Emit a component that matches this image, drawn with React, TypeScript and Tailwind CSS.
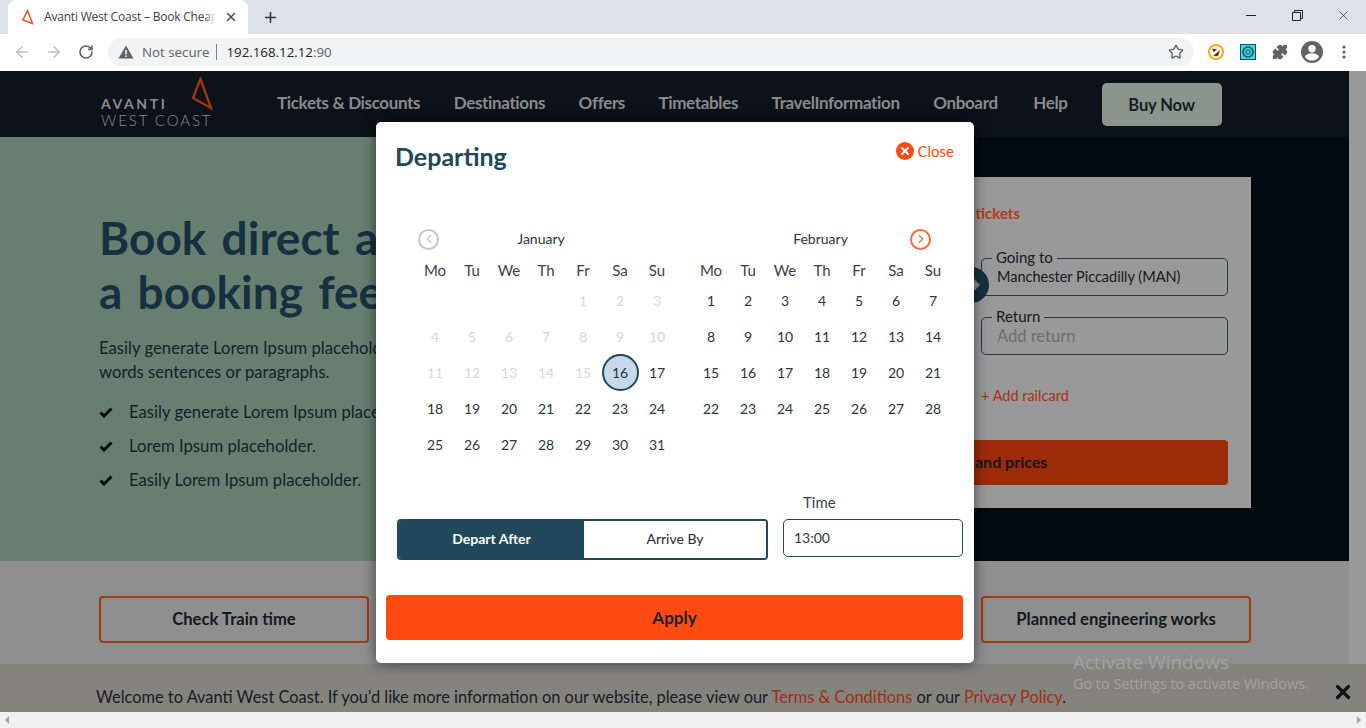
import { ArrowLeft, ArrowRight, RotateCw, Star, Puzzle, X, Plus, ChevronLeft, ChevronRight } from 'lucide-react'

const navLinks = ['Tickets & Discounts', 'Destinations', 'Offers', 'Timetables', 'TravelInformation', 'Onboard', 'Help']
const weekdays = ['Mo', 'Tu', 'We', 'Th', 'Fr', 'Sa', 'Su']
const heroPoints = ['Easily generate Lorem Ipsum placeholder text.', 'Lorem Ipsum placeholder.', 'Easily Lorem Ipsum placeholder.']

function TabBar() {
  return (
    <div className="flex h-[34px] items-end bg-[#dee1e6] pl-2">
      <div className="flex h-[34px] w-[240px] items-center rounded-t-lg bg-white pl-[14px] text-[12px] tracking-[-0.2px] text-[#3c4043]">
        <svg width="12" height="16" viewBox="0 0 12 16" fill="none" className="shrink-0">
          <path d="M5.5 1.5 1 11l9.5 3.500z" stroke="#f0532b" strokeWidth="1.5" />
        </svg>
        <div className="relative ml-[10px] w-[172px] overflow-hidden whitespace-nowrap">
          Avanti West Coast – Book Cheap
          <span className="absolute inset-y-0 right-0 w-[12px] bg-gradient-to-r from-transparent to-white" />
        </div>
        <X size={14} strokeWidth={2.5} className="ml-[8px] text-[#4a4d51]" />
      </div>
      <div className="flex h-[34px] w-[44px] items-center justify-center text-[#35373a]">
        <Plus size={17} strokeWidth={2.2} />
      </div>
      <div className="ml-auto flex h-[30px] self-start text-[#202124]">
        <div className="flex w-[46px] items-center justify-center">
          <span className="h-px w-[10px] bg-[#202124]" />
        </div>
        <div className="flex w-[46px] items-center justify-center">
          <svg width="11" height="11" viewBox="0 0 11 11" fill="none" stroke="currentColor">
            <path d="M.5 2.500h8v8h-8zM2.500 2.500v-2h8v8h-2" />
          </svg>
        </div>
        <div className="flex w-[46px] items-center justify-center"><X size={15} strokeWidth={1.1} /></div>
      </div>
    </div>
  )
}

function Toolbar() {
  return (
    <div className="flex h-[37px] items-center bg-white pb-[1px]">
      <div className="flex w-[108px] items-center">
        <ArrowLeft size={18} strokeWidth={2} className="ml-[13px] text-[#bcbfc3]" />
        <ArrowRight size={18} strokeWidth={2} className="ml-[14px] text-[#bcbfc3]" />
        <RotateCw size={16} strokeWidth={2.4} className="ml-[15px] text-[#5f6368]" />
      </div>
      <div className="flex h-[28px] w-[1086px] items-center rounded-full bg-[#f1f3f4] px-[10px] text-[13.3px] font-['Open_Sans',sans-serif]">
        <svg width="16" height="14" viewBox="0 0 16 14" fill="#5f6368">
          <path d="M8 .5 15.500 13.500H.5zM7.200 5v4.500h1.600V5zm0 5.500V12h1.600v-1.500z" fillRule="evenodd" />
        </svg>
        <span className="ml-[8px] pt-px text-[#5f6368]">Not secure</span>
        <span className="ml-[7px] h-[16px] w-px bg-[#7d8185]" />
        <span className="ml-[9px] pt-px text-[#202124]">192.168.12.12<span className="text-[#5f6368]">:90</span></span>
        <Star size={16} strokeWidth={2} className="ml-auto text-[#5f6368]" />
      </div>
      <div className="flex items-center pl-[6px]">
        <div className="flex w-[32px] justify-center">
          <svg width="16" height="16" viewBox="0 0 16 16" fill="none">
            <circle cx="8" cy="8" r="7" stroke="#f5a623" strokeWidth="2" />
            <path d="M4 5h5L6 8M5 12l7-6-2 6z" fill="#222" stroke="#f5a623" strokeWidth=".5" />
          </svg>
        </div>
        <div className="flex w-[32px] justify-center">
          <svg width="16" height="16" viewBox="0 0 16 16" fill="none">
            <rect x=".5" y=".5" width="15" height="15" fill="#3fd6e4" stroke="#14505c" />
            <circle cx="8" cy="8" r="5" stroke="#14505c" strokeWidth="1.5" />
            <circle cx="8" cy="8" r="2.200" stroke="#14505c" />
          </svg>
        </div>
        <div className="flex w-[32px] justify-center">
          <Puzzle size={16} fill="#5f6368" className="text-[#5f6368]" />
        </div>
        <div className="flex w-[32px] justify-center">
          <svg width="22" height="22" viewBox="0 0 22 22" fill="#5f6368">
            <path d="M11 0a11 11 0 1 0 0 22 11 11 0 0 0 0-22zm0 4a3.700 3.700 0 1 1 0 7.400 3.700 3.700 0 0 1 0-7.400zm0 15.600a8.400 8.400 0 0 1-7-3.700c0-2.300 4.700-3.600 7-3.600s7 1.300 7 3.600a8.400 8.400 0 0 1-7 3.700z" />
          </svg>
        </div>
        <div className="flex w-[32px] items-center justify-center">
          <svg width="4" height="14" viewBox="0 0 4 14" fill="#5f6368">
            <circle cx="2" cy="2" r="1.600" />
            <circle cx="2" cy="7" r="1.600" />
            <circle cx="2" cy="12" r="1.600" />
          </svg>
        </div>
      </div>
    </div>
  )
}

function SiteNav() {
  return (
    <div className="flex h-[66px] items-center bg-[#0b121a] pl-[101px]">
      <div className="relative h-[66px] w-[111px] shrink-0 text-[#8c8c8c]">
        <svg width="22" height="34" viewBox="0 0 22 34" fill="none" className="absolute left-[90px] top-[6px]">
          <path d="M9.500 2 2 21l18 10z" stroke="#a33410" strokeWidth="2.400" />
        </svg>
        <div className="absolute left-0 top-[25px] text-[14px] font-bold leading-[16px] tracking-[2.600px]">AVANTI</div>
        <div className="absolute left-0 top-[41px] whitespace-nowrap text-[15px] font-light leading-[16px] tracking-[1.900px]">WEST COAST</div>
      </div>
      <div className="ml-[65px] flex gap-[33.500px] pb-[2px] text-[17px] font-bold tracking-[-0.35px] text-[#8a8a8a]">
        {navLinks.map((link) => (
          <span key={link} className="whitespace-nowrap last:ml-[2px]">{link}</span>
        ))}
      </div>
      <button className="ml-[34px] h-[43px] w-[120px] rounded-[5px] bg-[#8a968c] pt-[2px] text-[16.500px] font-bold tracking-[-0.1px] text-[#131c26]">Buy Now</button>
    </div>
  )
}

function BookingCard() {
  return (
    <div className="ml-[287px] flex h-[331px] w-[291px] flex-col bg-[#999999] pr-[23px]">
      <div className="mt-[27px] h-[18px] w-[60px] text-right text-[15px] font-bold leading-[18px] text-[#b53a1c]">tickets</div>
      <div className="relative mt-[36px] flex justify-end">
        <div className="relative h-[38px] w-[247px] rounded-[5px] border border-[#1d3a48] px-[15px] pt-[8px] text-[14.500px] leading-[20px] text-[#121a22]">
          Manchester Piccadilly (MAN)
          <span className="absolute -top-[11px] left-[10px] bg-[#999999] px-[4px] text-[15px] leading-[18px]">Going to</span>
        </div>
        <div className="absolute -left-[7px] top-[9px] flex h-[36px] w-[36px] items-center justify-end rounded-full bg-[#163040] pr-[9px]">
          <span className="h-0 w-0 border-y-[6px] border-l-[6px] border-y-transparent border-l-[#8a8f91]" />
        </div>
      </div>
      <div className="mt-[21px] flex justify-end">
        <div className="relative h-[38px] w-[247px] rounded-[5px] border border-[#1d3a48] px-[15px] pt-[8px] text-[16.500px] leading-[20px] text-[#6b6f75]">
          Add return
          <span className="absolute -top-[11px] left-[10px] bg-[#999999] px-[4px] text-[15px] leading-[18px] text-[#121a22]">Return</span>
        </div>
      </div>
      <div className="mt-[32px] pl-[21px] text-[14.500px] leading-[18px] text-[#a93216]">+ Add railcard</div>
      <button className="mt-[35px] h-[45px] rounded-[4px] bg-[#9c2b0a] pb-[2px] pl-[15px] text-left text-[16px] font-bold text-[#101820]">and prices</button>
    </div>
  )
}

function Hero() {
  return (
    <div className="flex h-[424px] bg-[#677f71]">
      <div className="w-[673px] shrink-0 pl-[99px] pt-[74px]">
        <div className="w-[277px] overflow-hidden whitespace-nowrap">
          <h1 className="text-[46px] font-bold leading-[54px] text-[#17303f] [word-spacing:4px]">
            Book direct and
            <br />
            a booking fee
          </h1>
          <p className="mt-[17px] text-[16.700px] leading-[24px] text-[#141f2a]">
            Easily generate Lorem Ipsum placeholder
            <br />
            words sentences or paragraphs.
          </p>
          <div className="mt-[16px] flex flex-col gap-[10px] text-[16.700px] leading-[24px] text-[#141f2a]">
            {heroPoints.map((point) => (
              <div key={point} className="flex items-center">
                <svg width="14" height="11" viewBox="0 0 14 11" fill="none" className="shrink-0">
                  <path d="M1.500 5.500 5 9l7.500-7.500" stroke="#080b0e" strokeWidth="3" />
                </svg>
                <span className="ml-[16px]">{point}</span>
              </div>
            ))}
          </div>
        </div>
      </div>
      <div className="flex-1 bg-[#020a12] pt-[40px]">
        <BookingCard />
      </div>
    </div>
  )
}

function DayCell({ day, muted, selected }: { day?: number; muted?: boolean; selected?: boolean }) {
  if (selected) {
    return (
      <div className="flex h-[36px] items-center justify-center">
        <span className="flex h-[37px] w-[37px] shrink-0 items-center justify-center rounded-full border-2 border-[#20485a] bg-[#c5d9e6] text-[#20353f]">{day}</span>
      </div>
    )
  }
  return (
    <div className={`flex h-[36px] items-center justify-center ${muted ? 'text-[#d6d8da]' : 'text-[#2b3640]'}`}>{day}</div>
  )
}

function Month({ name, blanks, days, lastMuted, selected, nav }: { name: string; blanks: number; days: number; lastMuted: number; selected?: number; nav: 'prev' | 'next' }) {
  return (
    <div className="w-[259px]">
      <div className={`relative flex h-[22px] items-center justify-center text-[14px] text-[#2b3640] ${nav === 'prev' ? 'pr-[10px]' : 'pr-[3px]'}`}>
        {nav === 'prev' && (
          <span className="absolute left-[1.500px] top-[1.500px] flex h-[21px] w-[21px] items-center justify-center rounded-full border-2 border-[#c6c6c6] text-[#c6c6c6]">
            <ChevronLeft size={14} strokeWidth={2} />
          </span>
        )}
        {name}
        {nav === 'next' && (
          <span className="absolute right-[20.500px] top-[1.500px] flex h-[21px] w-[21px] items-center justify-center rounded-full border-2 border-[#ff6a3d] text-[#ff6a3d]">
            <ChevronRight size={14} strokeWidth={2} />
          </span>
        )}
      </div>
      <div className="mt-[10px] grid grid-cols-7 text-[15px] leading-[22px] text-[#38434d]">
        {weekdays.map((d) => (
          <div key={d} className="text-center">{d}</div>
        ))}
      </div>
      <div className="mt-[1px] grid grid-cols-7 text-[14px]">
        {Array.from({ length: blanks }).map((_, i) => (
          <DayCell key={`b${i}`} />
        ))}
        {Array.from({ length: days }).map((_, i) => (
          <DayCell key={i} day={i + 1} muted={i + 1 <= lastMuted} selected={i + 1 === selected} />
        ))}
      </div>
    </div>
  )
}

function DepartingModal() {
  return (
    <div className="absolute left-[376px] top-[51px] h-[541px] w-[598px] rounded-[5px] bg-white shadow-[0_1px_14px_rgba(0,0,0,0.55)]">
      <div className="flex items-start justify-between pl-[19px] pr-[20px]">
        <h2 className="mt-[18px] text-[25px] font-bold leading-[32px] text-[#20485a]">Departing</h2>
        <div className="mt-[20px] flex items-center gap-[4px] text-[15px] leading-[18px] text-[#ff4a14]">
          <span className="flex h-[18px] w-[18px] items-center justify-center rounded-full bg-[#ff4a14] text-white">
            <X size={12} strokeWidth={4} />
          </span>
          Close
        </div>
      </div>
      <div className="mt-[55px] flex gap-[17px] pl-[40.500px]">
        <Month name="January" blanks={4} days={31} lastMuted={15} selected={16} nav="prev" />
        <Month name="February" blanks={0} days={28} lastMuted={0} nav="next" />
      </div>
      <div className="relative mt-[31px] flex items-end pl-[21px] pr-[11px]">
        <div className="flex h-[41px] w-[371px] overflow-hidden rounded-[4px] border-2 border-[#20485a] text-[14px]">
          <div className="flex w-[185px] items-center justify-center bg-[#20485a] pb-[2px] font-bold text-white">Depart After</div>
          <div className="flex flex-1 items-center justify-center bg-white pb-[2px] text-[#1f2a33]">Arrive By</div>
        </div>
        <div className="mb-[3px] ml-[15px] flex-1">
          <div className="pb-px pl-[20px] text-[15px] leading-[19px] text-[#38434d]">Time</div>
          <div className="mt-[6px] flex h-[38px] items-center rounded-[5px] border border-[#20485a] pb-[2px] pl-[10px] text-[14px] text-[#2b3640]">13:00</div>
        </div>
      </div>
      <button className="ml-[10px] mt-[35px] h-[45px] w-[577px] rounded-[4px] bg-[#ff4a12] text-[17px] font-bold text-[#1a2430]">Apply</button>
    </div>
  )
}

export default function App() {
  return (
    <div className="flex h-screen flex-col overflow-hidden bg-white font-['Lato',sans-serif]">
      <div className="font-['Open_Sans',sans-serif]">
        <TabBar />
        <Toolbar />
      </div>
      <div className="relative flex h-[641px] overflow-hidden">
        <div className="flex-1">
          <SiteNav />
          <Hero />
          <div className="flex h-[151px] justify-between bg-[#8f8f8f] pl-[99px] pr-[98px] pt-[35px]">
            <button className="h-[47px] w-[270px] rounded-[4px] border-2 border-[#a53a12] pb-[1px] text-[16.600px] font-bold text-[#111922]">Check Train time</button>
            <button className="h-[47px] w-[270px] rounded-[4px] border-2 border-[#a53a12] pb-[1px] text-[16.600px] font-bold text-[#111922]">Planned engineering works</button>
          </div>
        </div>
        <div className="w-[17px] bg-[#999999]" />
        <div className="absolute bottom-0 left-0 flex h-[48px] w-full items-center bg-[#85837e] pl-[96px] pt-[18px] text-[16.400px] text-[#141c24]">
          <span>
            Welcome to Avanti West Coast. If you'd like more information on our website, please view our{' '}
            <span className="text-[#a12e14]">Terms &amp; Conditions</span> or our <span className="text-[#a12e14]">Privacy Policy</span>.
          </span>
          <X size={22} strokeWidth={3.5} className="absolute right-[12px] top-[17px] text-[#0c141c]" />
        </div>
        <DepartingModal />
        <div className="absolute left-[1073px] top-[579px] font-['Open_Sans',sans-serif] text-[#a3a19e]">
          <div className="text-[19px] leading-[24px]">Activate Windows</div>
          <div className="text-[14.400px] leading-[20px]">Go to Settings to activate Windows.</div>
        </div>
      </div>
      <div className="flex h-[16px] items-center justify-between bg-[#f0f0f0] px-[5px]">
        <span className="h-0 w-0 border-y-[4px] border-r-[4px] border-y-transparent border-r-[#a3a3a3]" />
        <span className="h-0 w-0 border-y-[4px] border-l-[4px] border-y-transparent border-l-[#a3a3a3]" />
      </div>
    </div>
  )
}
